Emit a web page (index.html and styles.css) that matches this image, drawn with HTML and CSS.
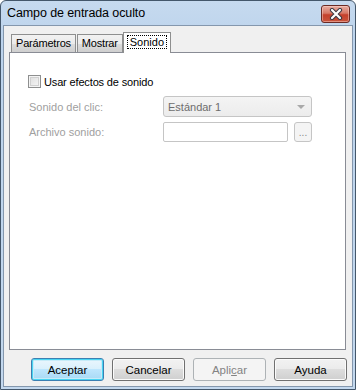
FILE: index.html
```html
<!DOCTYPE html>
<html lang="es">
<head>
  <meta charset="utf-8">
  <title>Campo de entrada oculto</title>
  <link rel="stylesheet" href="styles.css">
</head>
<body>
  <div class="window">
    <div class="titlebar">
      <span class="title">Campo de entrada oculto</span>
      <span class="close">
        <svg width="16" height="12" viewBox="0 0 16 12">
          <path d="M4 2 L12 10 M12 2 L4 10" stroke="#3a3a44" stroke-width="4.2" stroke-linecap="round"/>
          <path d="M4 2 L12 10 M12 2 L4 10" stroke="#ffffff" stroke-width="2.2" stroke-linecap="round"/>
        </svg>
      </span>
    </div>
    <div class="client">
      <div class="tabstrip">
        <div class="tab">Parámetros</div>
        <div class="tab">Mostrar</div>
        <div class="tab tab--active"><span class="tab__focus">Sonido</span></div>
      </div>
      <div class="panel">
        <label class="check">
          <span class="check__box"></span>
          <span>Usar efectos de sonido</span>
        </label>
        <div class="row">
          <span class="row__label">Sonido del clic:</span>
          <div class="combo">
            <span>Estándar 1</span>
            <span class="combo__arrow"></span>
          </div>
        </div>
        <div class="row row--file">
          <span class="row__label">Archivo sonido:</span>
          <div class="textbox"></div>
          <div class="browse">...</div>
        </div>
      </div>
      <div class="buttons">
        <button class="btn btn--default">Aceptar</button>
        <button class="btn">Cancelar</button>
        <button class="btn btn--disabled">Apli<u>c</u>ar</button>
        <button class="btn">Ayuda</button>
      </div>
    </div>
  </div>
</body>
</html>
```

FILE: styles.css
```css
* {
  box-sizing: border-box;
}

body {
  margin: 0;
  background-color: #ffffff;
  font-family: "Liberation Sans", Arial, sans-serif;
  font-size: 11px;
  color: #000000;
}

.window {
  width: 356px;
  height: 390px;
  display: flex;
  flex-direction: column;
  border: 1px solid #44576b;
  border-radius: 6px 6px 0 0;
  padding: 0 2px 2px 2px;
  background: linear-gradient(#c6daef, #bcd3ec 40px, #c3d8ee);
}

.titlebar {
  height: 24px;
  display: flex;
  align-items: flex-start;
  justify-content: space-between;
}

.title {
  margin-top: 5px;
  margin-left: 4px;
  font-size: 12.5px;
  letter-spacing: -0.1px;
  color: #000000;
}

.close {
  width: 29px;
  height: 18px;
  margin-top: 4px;
  margin-right: 3px;
  border: 1px solid #6b2a24;
  border-radius: 3px;
  background: linear-gradient(#e8ada2, #d67866 45%, #c4402c 55%, #c9543c);
  display: flex;
  align-items: center;
  justify-content: center;
  box-shadow: inset 0 0 0 1px rgba(255, 220, 210, 0.45);
}

.client {
  flex: 1;
  border: 1px solid #8497ad;
  background-color: #f0f0f0;
  padding: 6px 0 0 5px;
}

.tabstrip {
  display: flex;
  align-items: flex-end;
  height: 20px;
  padding-left: 2px;
}

.tab {
  height: 18px;
  padding: 0 4px;
  border: 1px solid #8e8f8f;
  border-bottom: none;
  margin-right: 1px;
  background: linear-gradient(#f2f2f2, #ebebeb 50%, #dddddd 50%, #cfcfcf);
  line-height: 17px;
  letter-spacing: -0.2px;
}

.tab--active {
  position: relative;
  z-index: 1;
  height: 21px;
  margin: 0 0 -1px -1px;
  padding: 0 4px;
  background: #ffffff;
  line-height: 19px;
  letter-spacing: 0;
}

.tab__focus {
  outline: 1px dotted #000000;
  outline-offset: 0;
  padding: 0 2px;
}

.panel {
  width: 337px;
  height: 298px;
  border: 1px solid #898c95;
  background-color: #ffffff;
  padding: 22px 0 0 18px;
}

.check {
  display: flex;
  align-items: center;
  height: 13px;
  gap: 3px;
  letter-spacing: -0.15px;
}

.check__box {
  width: 13px;
  height: 13px;
  border: 1px solid #8e8f8f;
  background: linear-gradient(135deg, #dcdcdc, #f8f8f8);
  box-shadow: inset 0 0 0 1px #f4f4f4, inset 0 0 0 2px #d0d0d0;
}

.row {
  display: flex;
  align-items: center;
  margin-top: 8px;
  height: 21px;
  color: #a0a0a0;
}

.row--file {
  margin-top: 5px;
  height: 20px;
}

.row__label {
  width: 135px;
  padding-left: 1px;
}

.combo {
  width: 149px;
  height: 21px;
  border: 1px solid #c5c5c5;
  border-radius: 3px;
  background: linear-gradient(#f4f4f4, #f0f0f0 50%, #ececec);
  display: flex;
  align-items: center;
  justify-content: space-between;
  padding: 0 6px 0 4px;
  color: #6d6d6d;
}

.combo__arrow {
  width: 0;
  height: 0;
  border-left: 4px solid transparent;
  border-right: 4px solid transparent;
  border-top: 4px solid #a9a9a9;
}

.textbox {
  width: 125px;
  height: 20px;
  border: 1px solid #c5c5c5;
  border-radius: 2px;
  background-color: #ffffff;
}

.browse {
  width: 18px;
  height: 20px;
  margin-left: 6px;
  border: 1px solid #c5c5c5;
  border-radius: 3px;
  background-color: #f4f4f4;
  color: #8a8a8a;
  font-size: 10px;
  text-align: center;
  line-height: 20px;
}

.buttons {
  display: flex;
  justify-content: flex-end;
  gap: 8px;
  margin-top: 8px;
  padding-right: 5px;
}

.btn {
  width: 73px;
  height: 23px;
  border: 1px solid #707070;
  border-radius: 3px;
  background: linear-gradient(#f2f2f2, #ebebeb 50%, #dddddd 50%, #cfcfcf);
  box-shadow: inset 0 0 0 1px #fbfbfb;
  font-family: "Liberation Sans", Arial, sans-serif;
  font-size: 11.5px;
  color: #000000;
  padding: 0;
}

.btn--default {
  border-color: #3c7fb1;
  background: linear-gradient(#eaf6fd, #d9f0fc 50%, #bee6fd 50%, #a7d9f5);
  box-shadow: inset 0 0 0 1px #48d4f2, inset 0 0 0 2px #c6ebf8;
}

.btn--disabled {
  border-color: #adb2b5;
  background: #f4f4f4;
  box-shadow: none;
  color: #838383;
}
```
